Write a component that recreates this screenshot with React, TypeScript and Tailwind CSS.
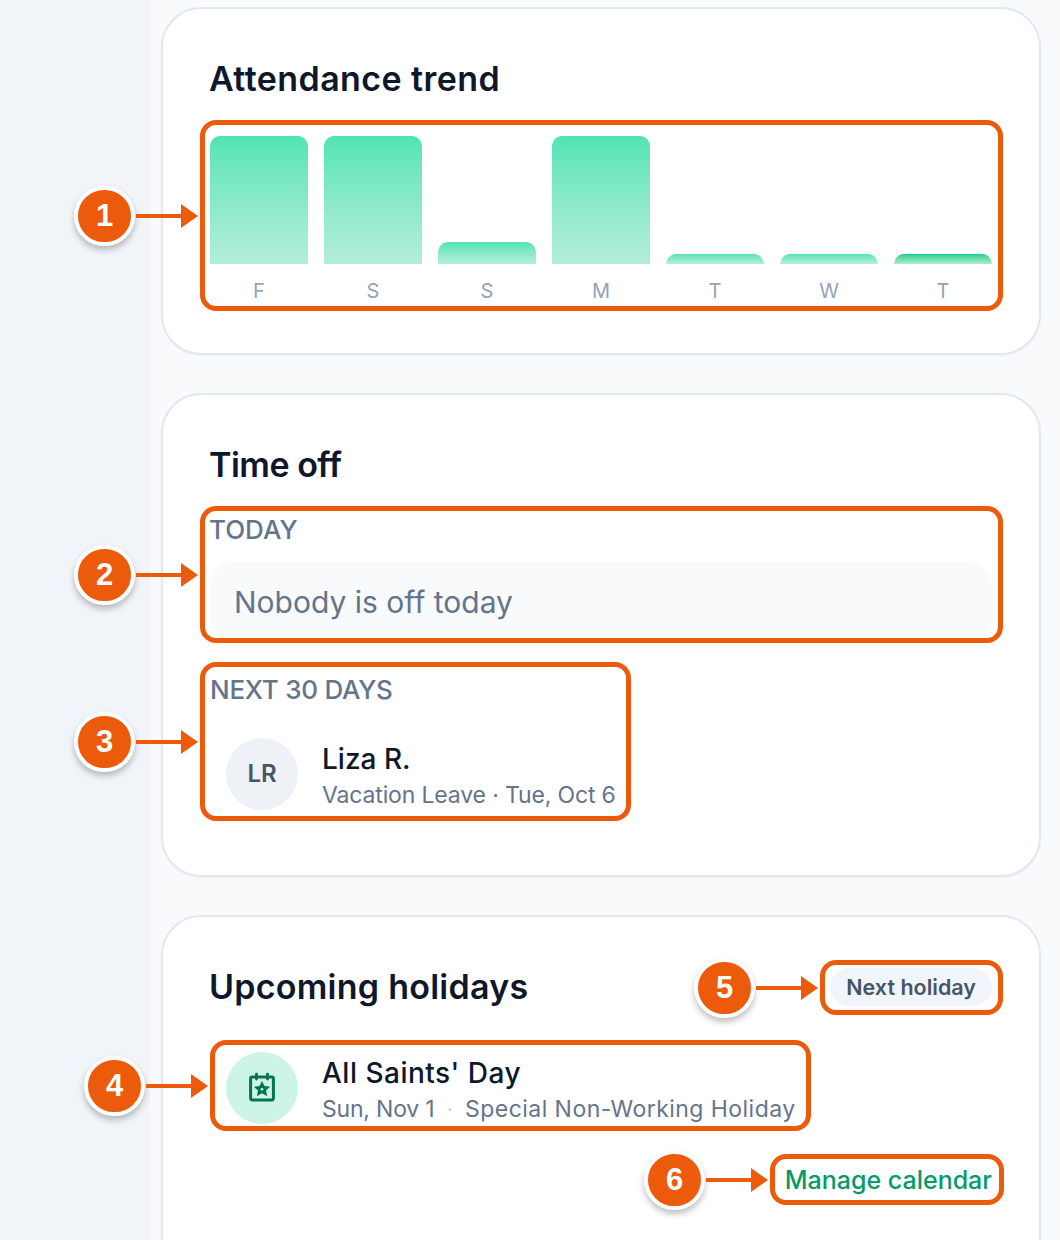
import React from "react";

const bars = [
  { d: "F", h: 128 },
  { d: "S", h: 128 },
  { d: "S", h: 22 },
  { d: "M", h: 128 },
  { d: "T", h: 10 },
  { d: "W", h: 10 },
  { d: "T", h: 10, last: true },
];

function Box({ className }: { className: string }) {
  return <div className={`absolute border-[5px] border-[#ec5a0b] rounded-[16px] ${className}`} />;
}

function Marker({ n, className }: { n: number; className: string }) {
  return (
    <div className={`absolute flex items-center ${className}`}>
      <div className="flex h-[60px] w-[61px] items-center justify-center rounded-full border-[4px] border-white bg-[#ec5a0b] text-[31px] font-bold text-white shadow-[0_4px_6px_rgba(0,0,0,0.25)] [font-family:'Liberation_Sans',sans-serif]">
        {n}
      </div>
      <svg width="62" height="24" viewBox="0 0 62 24" className="ml-[1px]">
        <rect x="0" y="10" width="46" height="4" fill="#ec5a0b" />
        <path d="M45 0 L62 12 L45 24 Z" fill="#ec5a0b" />
      </svg>
    </div>
  );
}

function CalendarStar() {
  return (
    <svg width="28" height="30" viewBox="0 0 28 30" fill="none" className="translate-y-[-0.5px]">
      <rect x="2.6" y="4.6" width="22.8" height="22.8" rx="1.6" stroke="#05734f" strokeWidth="3" />
      <path d="M8.5 1.5v5M19.5 1.5v5" stroke="#05734f" strokeWidth="2.8" strokeLinecap="round" />
      <path
        d="M14 8.6l2.5 5 5.6.7-4.1 3.8 1.2 5.6-5.2-2.9-5.2 2.9 1.2-5.6-4.1-3.8 5.6-.7z"
        fill="#05734f"
      />
      <circle cx="14" cy="16.8" r="1.4" fill="#ccf5e6" />
    </svg>
  );
}

function Card({ className, children }: { className?: string; children: React.ReactNode }) {
  return (
    <section
      className={`shrink-0 rounded-[40px] border-2 border-[#e2e8f0] bg-white px-[47px] pt-[50px] shadow-[0_1px_2px_rgba(15,23,42,0.04)] ${className ?? ""}`}
    >
      {children}
    </section>
  );
}

function Person({
  avatar,
  name,
  sub,
}: {
  avatar: React.ReactNode;
  name: React.ReactNode;
  sub: React.ReactNode;
}) {
  return (
    <div className="flex items-center gap-[24px] pl-[16px]">
      {avatar}
      <div className="flex flex-col pt-[6px]">
        <div className="text-[28px] leading-[36px] font-medium text-[#0f172a]">{name}</div>
        <div className="text-[23px] leading-[36px] text-[#64748b] whitespace-nowrap">{sub}</div>
      </div>
    </div>
  );
}

export default function App() {
  return (
    <div className="relative flex h-[1240px] w-[1060px] overflow-hidden bg-[#f8fafc] [font-family:Inter,sans-serif]">
      <aside className="w-[150px] shrink-0 bg-[#f1f5f9]" />
      <main className="flex flex-1 flex-col gap-[38px] pl-[11px] pr-[19px] pt-[7px]">
        <Card className="h-[348px]">
          <h2 className="-ml-[1px] text-[34px] leading-[40px] font-semibold tracking-[0.42px] text-[#0f172a]">
            Attendance trend
          </h2>
          <div className="mt-[37px] flex gap-[16px]">
            {bars.map((b, i) => (
              <div key={i} className="flex flex-1 flex-col items-center">
                <div className="flex h-[128px] w-full items-end">
                  <div
                    className={`w-full rounded-t-[10px] bg-gradient-to-b ${
                      b.last ? "from-[#00cc8e] to-[#a8ecd4]" : "from-[#4fe3b5] to-[#b3eeda]"
                    }`}
                    style={{ height: b.h }}
                  />
                </div>
                <div className="mt-[13px] text-[20px] leading-[28px] text-[#94a3b8]">{b.d}</div>
              </div>
            ))}
          </div>
        </Card>

        <Card className="h-[484px]">
          <h2 className="-ml-[1px] text-[34px] leading-[40px] font-semibold tracking-[-0.5px] text-[#0f172a]">
            Time off
          </h2>
          <div className="mt-[29px] -ml-[1px] text-[26px] leading-[32px] font-medium text-[#64748b]">TODAY</div>
          <div className="mt-[16px] flex h-[80px] items-center rounded-[24px] bg-[#f8fafc] px-[24px] text-[30px] text-[#64748b]">
            Nobody is off today
          </div>
          <div className="mt-[32px] text-[26px] leading-[32px] font-medium tracking-[-0.25px] text-[#64748b]">
            NEXT 30 DAYS
          </div>
          <div className="mt-[29px]">
            <Person
              avatar={
                <div className="flex h-[72px] w-[72px] shrink-0 items-center justify-center rounded-full bg-[#eef1f6] text-[24px] font-semibold text-[#475569]">
                  LR
                </div>
              }
              name="Liza R."
              sub={<span className="tracking-[-0.15px]">Vacation Leave · Tue, Oct 6</span>}
            />
          </div>
        </Card>

        <Card className="h-[400px]">
          <div className="flex items-center justify-between">
            <h2 className="-ml-[1px] text-[34px] leading-[40px] font-semibold tracking-[0.25px] text-[#0f172a]">
              Upcoming holidays
            </h2>
            <span className="rounded-full bg-[#f1f5f9] px-[16px] py-[3px] text-[21.5px] leading-[32px] font-semibold text-[#475569]">
              Next holiday
            </span>
          </div>
          <div className="mt-[42px]">
            <Person
              avatar={
                <div className="flex h-[72px] w-[72px] shrink-0 items-center justify-center rounded-full bg-[#ccf5e6]">
                  <CalendarStar />
                </div>
              }
              name={<span className="tracking-[0.5px]">All Saints' Day</span>}
              sub={
                <>
                  <span className="tracking-[-0.2px]">Sun, Nov 1</span>
                  <span className="mx-[12px] text-[#cbd5e1]">·</span>
                  <span className="tracking-[0.45px]">Special Non-Working Holiday</span>
                </>
              }
            />
          </div>
          <div className="mt-[35px] flex justify-end">
            <a className="text-[25px] leading-[36px] font-medium text-[#059b69]">Manage calendar</a>
          </div>
        </Card>
      </main>

      <Box className="left-[200px] top-[120px] h-[191px] w-[803px]" />
      <Box className="left-[200px] top-[506px] h-[137px] w-[803px]" />
      <Box className="left-[200px] top-[662px] h-[159px] w-[431px]" />
      <Box className="left-[210px] top-[1040px] h-[91px] w-[601px]" />
      <Box className="left-[820px] top-[960px] h-[55px] w-[183px]" />
      <Box className="left-[770px] top-[1154px] h-[51px] w-[234px]" />

      <Marker n={1} className="left-[74px] top-[186px]" />
      <Marker n={2} className="left-[74px] top-[545px]" />
      <Marker n={3} className="left-[74px] top-[712px]" />
      <Marker n={4} className="left-[84px] top-[1056px]" />
      <Marker n={5} className="left-[694px] top-[958px]" />
      <Marker n={6} className="left-[644px] top-[1150px]" />
    </div>
  );
}
